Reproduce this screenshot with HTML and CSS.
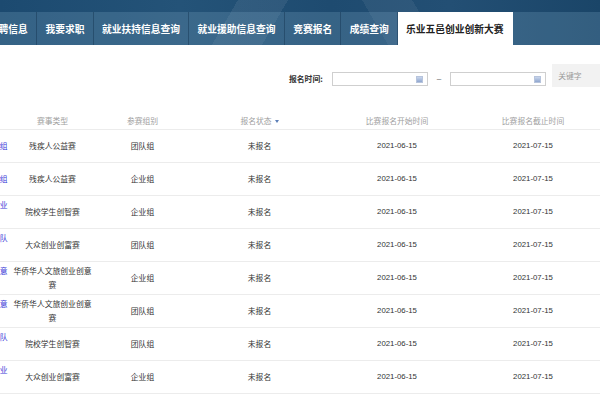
FILE: index.html
```html
<!DOCTYPE html>
<html lang="zh-CN">
<head>
<meta charset="utf-8">
<title>乐业五邑创业创新大赛</title>
<link rel="stylesheet" href="styles.css">
</head>
<body>
<header class="banner">
  <div class="banner-top"></div>
  <nav class="nav">
    <a class="tab">招聘信息</a>
    <a class="tab">我要求职</a>
    <a class="tab">就业扶持信息查询</a>
    <a class="tab">就业援助信息查询</a>
    <a class="tab">竞赛报名</a>
    <a class="tab">成绩查询</a>
    <a class="tab active">乐业五邑创业创新大赛</a>
  </nav>
</header>

<section class="filter">
  <span class="filter-label">报名时间:</span>
  <span class="date-input"><i class="cal"></i></span>
  <span class="dash">–</span>
  <span class="date-input"><i class="cal"></i></span>
  <span class="keyword">关键字</span>
</section>

<table class="list">
  <colgroup>
    <col class="c1"><col class="c2"><col class="c3"><col class="c4"><col class="c5"><col class="c6">
  </colgroup>
  <thead>
    <tr>
      <th>赛事名称</th>
      <th>赛事类型</th>
      <th>参赛组别</th>
      <th>报名状态<i class="sort"></i></th>
      <th>比赛报名开始时间</th>
      <th>比赛报名截止时间</th>
    </tr>
  </thead>
  <tbody>
    <tr><td class="link">残疾人公益赛道团队组</td><td>残疾人公益赛</td><td>团队组</td><td>未报名</td><td>2021-06-15</td><td>2021-07-15</td></tr>
    <tr><td class="link">残疾人公益赛道企业组</td><td>残疾人公益赛</td><td>企业组</td><td>未报名</td><td>2021-06-15</td><td>2021-07-15</td></tr>
    <tr><td class="link">院校学生创智赛之企业组别</td><td>院校学生创智赛</td><td>企业组</td><td>未报名</td><td>2021-06-15</td><td>2021-07-15</td></tr>
    <tr><td class="link">大众创业创富赛之团队组别</td><td>大众创业创富赛</td><td>团队组</td><td>未报名</td><td>2021-06-15</td><td>2021-07-15</td></tr>
    <tr><td class="link">华侨华人文旅创业创意赛企业组</td><td>华侨华人文旅创业创意赛</td><td>企业组</td><td>未报名</td><td>2021-06-15</td><td>2021-07-15</td></tr>
    <tr><td class="link">华侨华人文旅创业创意赛团队组</td><td>华侨华人文旅创业创意赛</td><td>团队组</td><td>未报名</td><td>2021-06-15</td><td>2021-07-15</td></tr>
    <tr><td class="link">院校学生创智赛之团队组别</td><td>院校学生创智赛</td><td>团队组</td><td>未报名</td><td>2021-06-15</td><td>2021-07-15</td></tr>
    <tr><td class="link">大众创业创富赛之企业组别</td><td>大众创业创富赛</td><td>企业组</td><td>未报名</td><td>2021-06-15</td><td>2021-07-15</td></tr>
  </tbody>
</table>
</body>
</html>
```

FILE: styles.css
```css
html, body {
  margin: 0;
  padding: 0;
  background: #ffffff;
  overflow: hidden;
  width: 600px;
  height: 400px;
}

body {
  font-family: "Liberation Sans", "Noto Sans CJK SC", sans-serif;
  color: #333;
}

/* ---------- banner ---------- */
.banner {
  height: 45px;
  display: flex;
  flex-direction: column;
  background:
    linear-gradient(120deg, transparent 0 38%, rgba(255,255,255,0.07) 38% 46%, transparent 46% 100%),
    linear-gradient(60deg, transparent 0 62%, rgba(255,255,255,0.06) 62% 70%, transparent 70% 100%),
    linear-gradient(90deg, #1c4a70 0%, #245378 30%, #1e4b70 55%, #234f74 75%, #1a4568 100%);
}

.banner-top {
  height: 12px;
  flex: none;
}

.nav {
  height: 33px;
  display: flex;
  margin-left: -19.5px;
  background: rgba(120, 160, 190, 0.28);
}

.tab {
  display: flex;
  align-items: center;
  padding: 0 8.3px;
  border-right: 1px solid rgba(20, 50, 80, 0.45);
  color: #ffffff;
  font-family: "Noto Sans CJK SC", sans-serif;
  font-size: 9.75px;
  font-weight: 700;
  white-space: nowrap;
}

.tab.active {
  background: #ffffff;
  color: #222;
  border-right: none;
  padding: 0 9px 0 8px;
}

/* ---------- filter ---------- */
.filter {
  display: flex;
  align-items: flex-end;
  margin-top: 19px;
  padding-left: 289px;
  height: 23px;
  white-space: nowrap;
}

.filter-label {
  font-family: "Noto Sans CJK SC", sans-serif;
  font-size: 7.8px;
  font-weight: 700;
  color: #333;
  line-height: 14px;
  margin-bottom: 1px;
  margin-right: 9px;
}

.date-input {
  box-sizing: border-box;
  width: 96px;
  height: 14px;
  border: 1px solid #cfcfcf;
  background: #fff;
  margin-bottom: 1px;
  display: flex;
  align-items: center;
  justify-content: flex-end;
  padding-right: 4px;
  flex: none;
}

.cal {
  width: 5px;
  height: 5px;
  background: linear-gradient(180deg, #c9d6ec 0%, #8fa6cf 100%);
  border: 0.5px solid #b7c4dc;
}

.dash {
  font-size: 8px;
  color: #555;
  line-height: 14px;
  margin: 0 9px 1px 9px;
}

.keyword {
  box-sizing: border-box;
  margin-left: 6px;
  width: 60px;
  height: 23px;
  flex: none;
  background: #f2f2f2;
  color: #9a9a9a;
  font-family: "Noto Sans CJK SC", sans-serif;
  font-size: 7.8px;
  line-height: 23px;
  padding-left: 6px;
}

/* ---------- table ---------- */
.list {
  margin-top: 27px;
  margin-left: -73px;
  width: 674px;
  table-layout: fixed;
  border-collapse: collapse;
  font-size: 7.8px;
}

.c1 { width: 83px; }
.c2 { width: 85px; }
.c3 { width: 95px; }
.c4 { width: 139px; }
.c5 { width: 136px; }
.c6 { width: 136px; }

.list th {
  height: 15px;
  padding: 0 2px;
  font-weight: 400;
  color: #a0a0a0;
  text-align: center;
  vertical-align: top;
  line-height: 14px;
  border-bottom: 1px solid #ececec;
  font-family: "Noto Sans CJK SC", sans-serif;
}

.sort {
  display: inline-block;
  width: 0;
  height: 0;
  margin-left: 3px;
  vertical-align: 1px;
  border-left: 2.5px solid transparent;
  border-right: 2.5px solid transparent;
  border-top: 3px solid #5c7fb8;
}

.list td {
  height: 32px;
  padding: 0 3px;
  text-align: center;
  vertical-align: middle;
  line-height: 14px;
  color: #333;
  border-bottom: 1px solid #ececec;
}

.list td.link {
  color: #3b3bd8;
  padding: 0 2px;
  font-family: "Noto Sans CJK SC", sans-serif;
}

.list td:nth-child(2),
.list td:nth-child(3),
.list td:nth-child(4) {
  font-family: "Noto Sans CJK SC", sans-serif;
}
```
